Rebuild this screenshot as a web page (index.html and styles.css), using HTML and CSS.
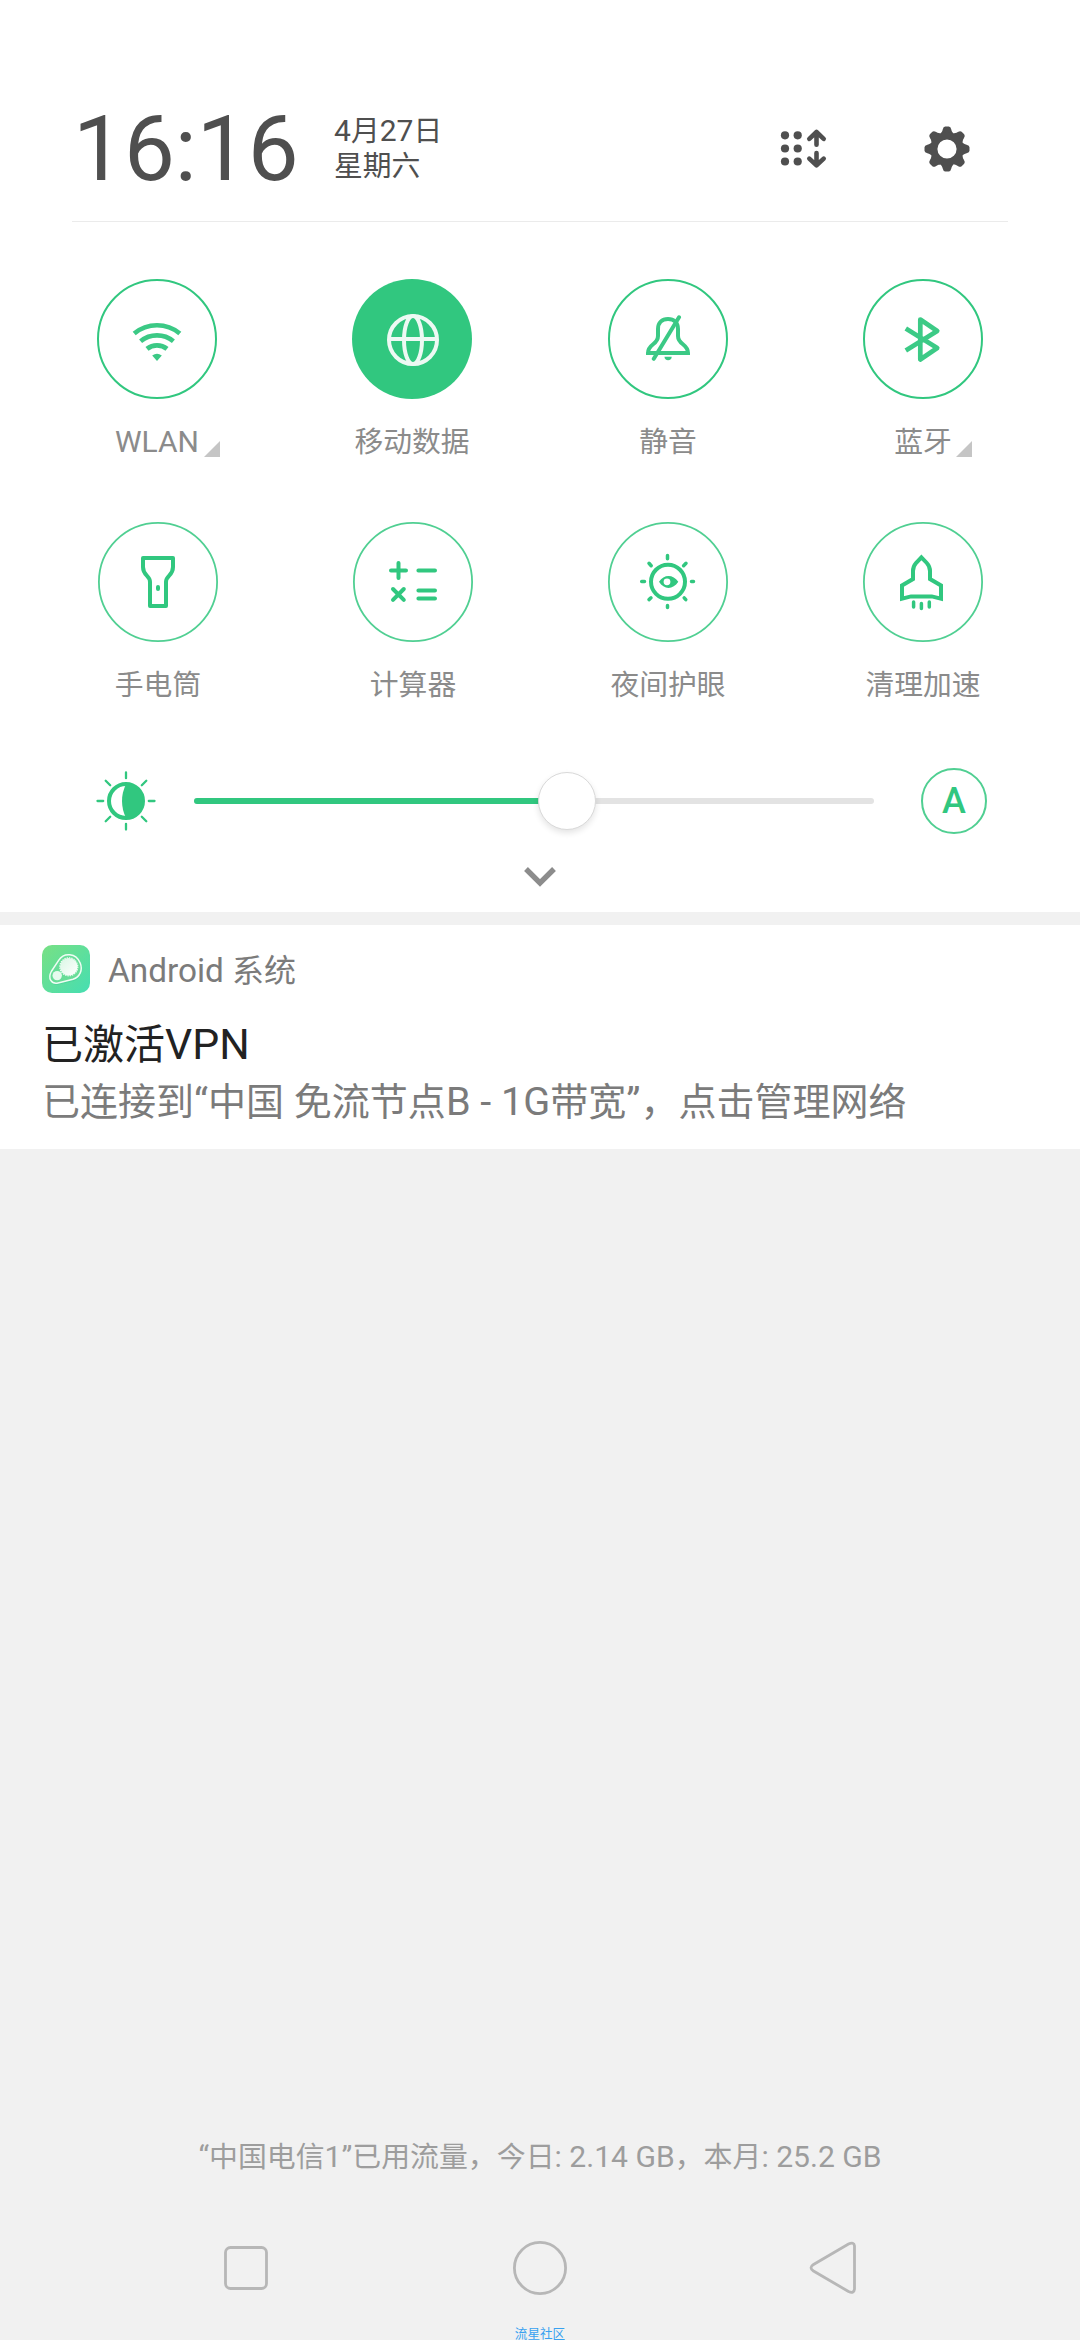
FILE: index.html
```html
<!DOCTYPE html>
<html lang="zh-CN">
<head>
<meta charset="utf-8">
<title>通知中心</title>
<link rel="stylesheet" href="styles.css">
</head>
<body>
<main class="shade">
  <section class="panel">
    <header class="head">
      <div class="clock">16:16</div>
      <div class="date"><div><span class="latin">4</span>月<span class="latin">27</span>日</div><div>星期六</div></div>
      <svg class="head-icon edit" viewBox="0 0 52 46">
        <g fill="#4f4f4f"><circle cx="7" cy="9.3" r="4.1"/><circle cx="19.7" cy="9.3" r="4.1"/><circle cx="7" cy="22.5" r="4.1"/><circle cx="19.7" cy="22.5" r="4.1"/><circle cx="7" cy="35.5" r="4.1"/><circle cx="19.7" cy="35.5" r="4.1"/></g>
        <path d="M38.5 18.8V6.5M31.3 12.8L38.5 6L45.7 12.8M38.5 27V39M31.3 32.6L38.5 39.4L45.7 32.6" fill="none" stroke="#4f4f4f" stroke-width="4.6" stroke-linecap="round" stroke-linejoin="round"/>
      </svg>
      <svg class="head-icon gear" viewBox="-23 -23 46 46">
        <defs><path id="tooth" d="M-7-14.5C-5.6-17-4.7-17.2-4.3-19.6Q-3.7-22.5-1.8-22.5H1.8Q3.7-22.5 4.3-19.6C4.7-17.2 5.6-17 7-14.5Z"/></defs>
        <g fill="#4f4f4f"><use href="#tooth"/><use href="#tooth" transform="rotate(45)"/><use href="#tooth" transform="rotate(90)"/><use href="#tooth" transform="rotate(135)"/><use href="#tooth" transform="rotate(180)"/><use href="#tooth" transform="rotate(225)"/><use href="#tooth" transform="rotate(270)"/><use href="#tooth" transform="rotate(315)"/></g>
        <circle r="13" fill="none" stroke="#4f4f4f" stroke-width="6.8"/>
      </svg>
    </header>

    <div class="tiles first">
      <div class="tile">
        <svg class="knob" viewBox="0 0 120 120"><circle class="ring" cx="60" cy="60" r="59"/>
          <g class="soft"><path class="line w47" d="M37.2 54.5A35.7 35.7 0 0 1 82.8 54.5M43.6 62.2A25.7 25.7 0 0 1 76.4 62.2M50 69.9A15.7 15.7 0 0 1 70 69.9"/><path class="solid" d="M60 82L55.2 76.6Q60 73 64.8 76.6Z"/></g></svg>
        <div class="label"><span class="latin">WLAN</span><i class="more"></i></div>
      </div>
      <div class="tile">
        <svg class="knob" viewBox="0 0 120 120"><circle cx="60" cy="60" r="60" fill="#31c77f"/>
          <g fill="none" stroke="#edf9f3" stroke-width="4"><circle cx="61" cy="61" r="24"/><ellipse cx="61" cy="61" rx="9" ry="24"/><path d="M37 60H85"/></g></svg>
        <div class="label">移动数据</div>
      </div>
      <div class="tile">
        <svg class="knob" viewBox="0 0 120 120"><circle class="ring" cx="60" cy="60" r="59"/>
          <g class="soft"><path class="line" d="M40 74C40 64.5 50 66 50 57V50C50 44 54 40 60 40S70 44 70 50V57C70 66 80 64.5 80 74Z"/><path class="line round" d="M71 38.3L45.8 79.8"/><path class="solid" d="M56.5 77.8H63.7C63.7 80 62.3 81.2 60.1 81.2S56.5 80 56.5 77.8Z"/></g></svg>
        <div class="label">静音</div>
      </div>
      <div class="tile">
        <svg class="knob" viewBox="0 0 120 120"><circle class="ring" cx="60" cy="60" r="59"/>
          <path class="line soft w47" stroke-linejoin="round" d="M42.8 49.6L74.2 69L57.3 80.5V40.5L74.2 52L42.8 71.6"/></svg>
        <div class="label">蓝牙<i class="more bt"></i></div>
      </div>
    </div>

    <div class="tiles second">
      <div class="tile">
        <svg class="knob" viewBox="0 0 120 120"><circle class="ring thin" cx="60" cy="60" r="59.1"/>
          <path class="line" stroke-linejoin="round" d="M45 36H75V45C75 54 68 53 68 60V84H52V60C52 53 45 54 45 45Z"/><rect class="solid" x="58" y="63" width="4" height="6" rx="2"/></svg>
        <div class="label">手电筒</div>
      </div>
      <div class="tile">
        <svg class="knob" viewBox="0 0 120 120"><circle class="ring thin" cx="60" cy="60" r="59.1"/>
          <path class="line round" d="M38 48.4H53M45.5 41V56M65.4 48.4H82M65.4 68.4H82M65.4 76.5H82M40 67L50.8 77.8M50.8 67L40 77.8"/></svg>
        <div class="label">计算器</div>
      </div>
      <div class="tile">
        <svg class="knob" viewBox="0 0 120 120"><circle class="ring thin" cx="60" cy="60" r="59.1"/>
          <circle class="line" cx="60" cy="59.8" r="17"/>
          <path class="line round w35" d="M59.5 33.5V36.8M59.5 83.5V85.4M33.7 59.4H36.5M83.5 59.4H85.5M41 41.3L43.2 43.7M78 41.3L75.6 43.7M41 77.6L43 75.8M77.8 77.6L76.2 75.8"/>
          <path class="solid" fill-rule="evenodd" d="M51 59.8C56 52 65 52 70.3 59.8C65 67.9 56 67.9 51 59.8ZM59 56.4A3.4 3.4 0 1 0 59 63.2A3.4 3.4 0 1 0 59 56.4Z"/></svg>
        <div class="label">夜间护眼</div>
      </div>
      <div class="tile">
        <svg class="knob" viewBox="0 0 120 120"><circle class="ring thin" cx="60" cy="60" r="59.1"/>
          <path class="line" d="M58.4 35.3L53 41Q50 44.5 50 49V57L39 63.5V76.6L48 74.4H68.8L78 76.6V63.5L67 57V49Q67 44.5 63.8 41Z"/>
          <path class="line round w35" d="M50.6 80V85M58.4 81.5V86.4M66.3 80V85"/></svg>
        <div class="label">清理加速</div>
      </div>
    </div>

    <div class="brightness">
      <svg class="sun" viewBox="-30 -30 60 60">
        <circle class="line" r="17"/><path class="solid" d="M0-17A17 17 0 0 1 0 17Q-8 0 0-17Z"/>
        <path class="line round w23" d="M0-28.5V-22.8M0 22.8V28.5M-28.5 0H-22.8M22.8 0H28.5M-20.3-20.3L-15.8-15.8M20.3-20.3L15.8-15.8M-20.3 20.3L-15.8 15.8M20.3 20.3L15.8 15.8"/>
      </svg>
      <div class="track"><div class="fill"></div><div class="thumb"></div></div>
      <div class="auto">A</div>
    </div>
    <svg class="chevron" viewBox="0 0 34 22"><path d="M3 4L17 18L31 4" fill="none" stroke="#8c8c8c" stroke-width="5.4"/></svg>
  </section>

  <section class="card">
    <div class="app">
      <svg class="app-icon" viewBox="0 0 48 48">
        <defs>
          <linearGradient id="bg" x1="0" y1="0" x2="1" y2="1"><stop offset="0" stop-color="#78e084"/><stop offset="1" stop-color="#46deb2"/></linearGradient>
          <linearGradient id="disc" x1="0" y1="0" x2="1" y2="1"><stop offset="0" stop-color="#d9f7e4"/><stop offset="1" stop-color="#fff"/></linearGradient>
        </defs>
        <rect width="48" height="48" rx="10" fill="url(#bg)"/>
        <path d="M17 15L10 26C5 33 9 40 17 38L32 34.5C39 32 41 25 38.5 18C34 8 22 7 17 15Z" transform="translate(0 1.5)" fill="#3cc98e" opacity=".4"/>
        <path d="M16.8 15.2L9.3 26.5C5.5 33.5 9.5 39.5 16 38L31 34.2C38 32 41 25 38.2 18C34 8 22 7 16.8 15.2Z" fill="#68dd98" stroke="#effcf4" stroke-width="1.5"/>
        <circle cx="26.8" cy="21.8" r="8.8" fill="url(#disc)"/><circle cx="26.8" cy="21.8" r="9" fill="none" stroke="#effcf4" stroke-width="1.2" stroke-dasharray="1.4 .95"/>
        <circle cx="15.2" cy="30.6" r="4.7" fill="#e6faee"/>
      </svg>
      <span class="app-name"><span class="latin">Android </span>系统</span>
    </div>
    <div class="title">已激活<span class="latin">VPN</span></div>
    <div class="body">已连接到<span class="latin">“</span>中国<span class="latin"> </span>免流节点<span class="latin">B - 1G</span>带宽<span class="latin">”</span>，点击管理网络</div>
  </section>

  <div class="usage"><span class="latin">“</span>中国电信<span class="latin">1”</span>已用流量，今日<span class="latin">: 2.14 GB</span>，本月<span class="latin">: 25.2 GB</span></div>
  <nav class="nav">
    <svg viewBox="0 0 60 60"><rect x="9.5" y="9.5" width="41" height="41" rx="5"/></svg>
    <svg viewBox="0 0 60 60"><circle cx="30" cy="30" r="25.6"/></svg>
    <svg viewBox="0 0 60 60"><path d="M9.5 26.5L44.5 6Q50 3.5 50.5 8V51Q50 56 44.5 53.5L9.5 33Q4.5 29.7 9.5 26.5Z"/></svg>
  </nav>
  <div class="mark">流星社区</div>
</main>
</body>
</html>
```
FILE: styles.css
```css
* { box-sizing: border-box; }
body { margin: 0; font-family: Roboto, "Noto Sans CJK SC", sans-serif; }
svg { display: block; flex: none; }
.shade { width: 1080px; height: 2340px; background: #f1f1f1; display: flex; flex-direction: column; overflow: hidden; white-space: nowrap; }
.panel { height: 912px; flex: none; background: #fff; padding-top: 76px; }

/* Latin glyphs are set slightly larger than the Chinese ones beside them */
.latin { font-size: 1.042em; line-height: 1; white-space: pre; }

.head { margin: 0 72px; height: 146px; display: flex; align-items: center; border-bottom: 1px solid #ebebeb; color: #4f4f4f; }
.clock { width: 262px; padding-left: 1px; font-size: 90.6px; line-height: 106px; }
.date { font-size: 28.8px; line-height: 35px; flex: 1; }
.edit { width: 52px; height: 46px; }
.gear { width: 46px; height: 46px; margin: 0 38px 0 94px; }

.tiles { display: grid; grid-template-columns: 255px 256px 255px 120px; height: 243px; }
.first { margin: 57px 0 0 97px; }
.second { margin-left: 98px; grid-template-columns: 255px 255px 255px 120px; }
.tile { width: 120px; }
.knob { width: 120px; height: 120px; }
.ring { fill: none; stroke: #31c77f; stroke-width: 2; }
.thin { stroke-width: 1.8; opacity: .85; }
.soft { opacity: .95; }
.line { fill: none; stroke: #31c77f; stroke-width: 4; }
.w47 { stroke-width: 4.7; }
.w35 { stroke-width: 3.5; }
.w23 { stroke-width: 2.3; }
.round { stroke-linecap: round; }
.solid { fill: #31c77f; }
.label { position: relative; margin-top: 26px; font-size: 28.8px; line-height: 34px; text-align: center; color: #8b8b8b; }
.more { position: absolute; left: 107px; top: 16px; width: 16px; height: 16px; background: #c5c5c5; clip-path: polygon(100% 0, 100% 100%, 0 100%); }
.bt { left: 93px; }

.brightness { display: flex; align-items: center; height: 66px; margin: 3px 0 0 96px; }
.sun { width: 60px; height: 60px; }
.track { position: relative; margin-left: 38px; width: 680px; height: 6px; border-radius: 3px; background: #e3e3e3; }
.fill { width: 373px; height: 6px; border-radius: 3px; background: #31c77f; }
.thumb { position: absolute; left: 344px; top: -26px; width: 58px; height: 58px; border-radius: 50%; background: #fff; border: 1px solid #d9d9d9; box-shadow: 0 3px 6px rgba(0, 0, 0, .11); }
.auto { margin-left: 47px; width: 66px; height: 66px; border: 2px solid #50cf92; border-radius: 50%; text-align: center; font-size: 36px; line-height: 62px; font-weight: 500; color: #31c77f; }
.chevron { width: 34px; height: 22px; margin: 31px auto 0; }

.card { margin-top: 13px; height: 224px; flex: none; background: #fff; padding: 20px 42px 0; }
.app { display: flex; align-items: center; height: 48px; }
.app-icon { width: 48px; height: 48px; }
.app-name { margin-left: 18px; padding-top: 4px; font-size: 32px; color: #7b7b7b; line-height: 46px; }
.title { margin-top: 26px; font-size: 41px; line-height: 52px; color: #222; }
.body { margin-top: 5px; font-size: 38px; line-height: 52px; color: #7b7b7b; }

.usage { margin-top: auto; text-align: center; font-size: 28.9px; line-height: 36px; color: #9d9d9d; }
.nav { display: flex; justify-content: space-between; margin: 63px 216px 0; height: 60px; flex: none; }
.nav svg { width: 60px; height: 60px; fill: none; stroke: #b7b7b7; stroke-width: 2.8; }
.mark { margin-top: 29px; height: 13px; flex: none; text-align: center; font-size: 12.6px; line-height: 13px; color: #38a1f0; }
```
